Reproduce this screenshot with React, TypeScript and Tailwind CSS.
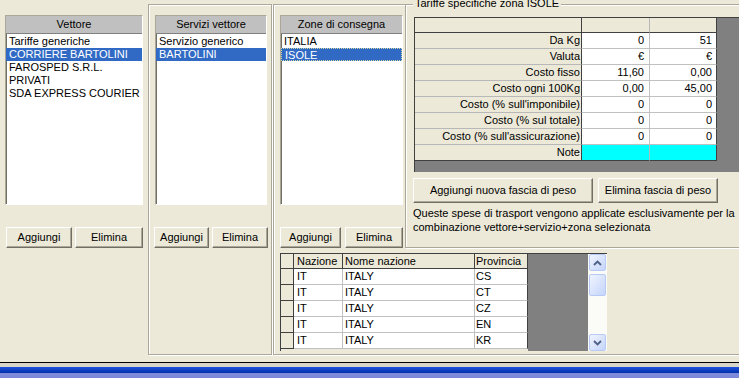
import React from "react";

const btn =
  "flex items-center justify-center bg-[#ece9d8] border border-t-white border-l-white border-r-[#716f64] border-b-[#716f64] shadow-[inset_-1px_-1px_0_#aca899] text-[11px] leading-none whitespace-nowrap";

const etched =
  "border border-[#aca899] shadow-[inset_1px_1px_0_#ffffff,1px_1px_0_#ffffff]";

function ListBox({
  w,
  title,
  items,
  sel,
  focus,
}: {
  w: string;
  title: string;
  items: string[];
  sel: number;
  focus?: boolean;
}) {
  return (
    <div
      className={`flex flex-col h-[190px] ${w} border border-t-[#aca899] border-l-[#aca899] border-r-white border-b-white`}
    >
      <div className="h-[18px] shrink-0 bg-[#c0c0c0] border-b border-[#808080] flex items-center justify-center leading-[13px]">
        {title}
      </div>
      <div className="flex-1 bg-white pt-[1px] overflow-hidden shadow-[inset_1px_0_0_#716f64]">
        {items.map((it, i) => (
          <div
            key={i}
            className={`h-[13px] leading-[13px] pl-[3px] whitespace-nowrap overflow-hidden ${
              i === sel ? "bg-[#316ac5] text-white" : ""
            } ${i === sel && focus ? "border border-dotted border-[#cfd8a0] pl-[2px] leading-[11px]" : ""}`}
          >
            {it}
          </div>
        ))}
      </div>
    </div>
  );
}

const tRows: [string, string, string][] = [
  ["Da Kg", "0", "51"],
  ["Valuta", "€", "€"],
  ["Costo fisso", "11,60", "0,00"],
  ["Costo ogni 100Kg", "0,00", "45,00"],
  ["Costo (% sull'imponibile)", "0", "0"],
  ["Costo (% sul totale)", "0", "0"],
  ["Costo (% sull'assicurazione)", "0", "0"],
];

function TariffeGrid() {
  return (
    <div className="w-[340px] h-[155px] bg-[#808080] border-l border-t border-[#404040] flex flex-col overflow-hidden">
      <div className="flex h-[15px] shrink-0">
        <div className="w-[167px] bg-[#ece9d8] border-r border-b border-[#404040]" />
        <div className="w-[68px] bg-[#ece9d8] border-r border-r-[#b8b8b8] border-b border-b-[#404040]" />
        <div className="w-[67px] bg-[#ece9d8] border-r border-b border-[#404040]" />
      </div>
      {tRows.map((r, i) => (
        <div key={i} className="flex h-[16px] shrink-0 leading-[15px]">
          <div className="w-[167px] bg-[#ece9d8] border-r border-r-[#404040] border-b border-b-[#b8b8b8] text-right pr-[1px] whitespace-nowrap">
            {r[0]}
          </div>
          <div className="w-[68px] bg-white border-r border-b border-[#c0c0c0] text-right pr-[5px]">
            {r[1]}
          </div>
          <div className="w-[67px] bg-white border-r border-r-[#404040] border-b border-b-[#c0c0c0] text-right pr-[4px]">
            {r[2]}
          </div>
        </div>
      ))}
      <div className="flex h-[16px] shrink-0 leading-[15px]">
        <div className="w-[167px] bg-[#ece9d8] border-r border-b border-[#404040] text-right pr-[1px]">
          Note
        </div>
        <div className="w-[68px] bg-[#00ffff] border-r border-r-[#b8b8b8] border-b border-b-[#404040]" />
        <div className="w-[67px] bg-[#00ffff] border-r border-b border-[#404040]" />
      </div>
    </div>
  );
}

const provs = ["CS", "CT", "CZ", "EN", "KR"];

function Chevron({ up }: { up?: boolean }) {
  return (
    <svg width="9" height="6" viewBox="0 0 9 6">
      <path
        d={up ? "M1 5 L4.5 1.5 L8 5" : "M1 1 L4.5 4.5 L8 1"}
        fill="none"
        stroke="#4d6185"
        strokeWidth="1.8"
      />
    </svg>
  );
}

const sbBtn =
  "w-[17px] h-[17px] rounded-[2px] border border-[#b7c9f5] bg-linear-to-br from-[#f0f4fe] to-[#c4d4fa] flex items-center justify-center";

function CountryGrid() {
  return (
    <div className="w-[327px] h-[98px] border-l border-t border-[#404040] flex overflow-hidden">
      <div className="flex flex-col">
        <div className="flex h-[15px] shrink-0 bg-[#ece9d8] leading-[14px]">
          <div className="w-[13px] border-r border-b border-[#404040]" />
          <div className="w-[49px] border-r border-b border-[#404040] pl-[3px]">Nazione</div>
          <div className="w-[132px] border-r border-b border-[#404040] pl-[2px]">Nome nazione</div>
          <div className="w-[53px] border-r border-b border-[#404040] pl-[1px]">Provincia</div>
        </div>
        {provs.map((p) => (
          <div key={p} className="flex h-[16px] shrink-0 leading-[15px]">
            <div className="w-[13px] bg-[#ece9d8] border-r border-b border-[#404040]" />
            <div className="w-[49px] bg-white border-r border-b border-[#c0c0c0] pl-[3px]">IT</div>
            <div className="w-[132px] bg-white border-r border-b border-[#c0c0c0] pl-[2px]">ITALY</div>
            <div className="w-[53px] bg-white border-r border-r-[#404040] border-b border-b-[#c0c0c0] pl-[1px]">
              {p}
            </div>
          </div>
        ))}
      </div>
      <div className="w-[60px] bg-[#808080]" />
      <div className="w-[19px] bg-[#fbfbf8] flex flex-col items-center pt-[0px]">
        <div className={sbBtn}>
          <Chevron up />
        </div>
        <div className="h-[3px]" />
        <div className={`${sbBtn} h-[22px]`} />
        <div className="flex-1" />
        <div className={sbBtn}>
          <Chevron />
        </div>
      </div>
    </div>
  );
}

export default function App() {
  return (
    <div className="relative w-[739px] h-[378px] overflow-hidden bg-[#ece9d8] text-[11px] leading-[13px] text-black font-['Liberation_Sans',Arial,sans-serif]">
      <div className="flex h-[356px]">
        {/* Column 1 */}
        <div className="w-[148px] shrink-0 pt-[15px] pl-[5px]">
          <ListBox
            w="w-[138px]"
            title="Vettore"
            items={[
              "Tariffe generiche",
              "CORRIERE BARTOLINI",
              "FAROSPED S.R.L.",
              "PRIVATI",
              "SDA EXPRESS COURIER SERVICE",
            ]}
            sel={1}
          />
          <div className="flex gap-[3px] mt-[22px] ml-[1px]">
            <div className={`${btn} w-[66px] h-[21px]`}>Aggiungi</div>
            <div className={`${btn} w-[68px] h-[21px]`}>Elimina</div>
          </div>
        </div>

        {/* Panel 2 */}
        <div className={`mt-[4px] w-[124px] h-[351px] shrink-0 ${etched}`}>
          <div className="ml-[6px] mt-[10px]">
            <ListBox
              w="w-[112px]"
              title="Servizi vettore"
              items={["Servizio generico", "BARTOLINI"]}
              sel={1}
            />
          </div>
          <div className="flex gap-[3px] mt-[22px] ml-[5px]">
            <div className={`${btn} w-[55px] h-[21px]`}>Aggiungi</div>
            <div className={`${btn} w-[56px] h-[21px]`}>Elimina</div>
          </div>
        </div>

        {/* Panel 3 */}
        <div className={`mt-[4px] ml-[1px] w-[480px] h-[351px] shrink-0 ${etched}`}>
          <div className="flex items-start">
            <div className="ml-[6px] w-[123px] shrink-0 pt-[10px]">
              <ListBox
                w="w-[123px]"
                title="Zone di consegna"
                items={["ITALIA", "ISOLE"]}
                sel={1}
                focus
              />
              <div className="flex gap-[4px] mt-[22px]">
                <div className={`${btn} w-[61px] h-[21px]`}>Aggiungi</div>
                <div className={`${btn} w-[58px] h-[21px]`}>Elimina</div>
              </div>
            </div>
            <div className={`relative ml-[2px] -mt-[1px] flex-1 h-[244px] ${etched}`}>
              <span className="absolute left-[7px] top-[-8px] px-[2px] bg-[#ece9d8] whitespace-nowrap leading-[13px]">
                Tariffe specifiche zona ISOLE
              </span>
              <div className="ml-[8px] mt-[12px]">
                <TariffeGrid />
              </div>
              <div className="flex gap-[5px] ml-[7px] mt-[6px]">
                <div className={`${btn} w-[180px] h-[25px]`}>Aggiungi nuova fascia di peso</div>
                <div className={`${btn} w-[120px] h-[25px]`}>Elimina fascia di peso</div>
              </div>
              <div className="ml-[7px] mt-[3px] leading-[14px] whitespace-nowrap">
                Queste spese di trasport vengono applicate esclusivamente per la
                <br />
                combinazione vettore+servizio+zona selezionata
              </div>
            </div>
          </div>
          <div className="ml-[6px] mt-[5px]">
            <CountryGrid />
          </div>
        </div>
      </div>
      <div className="h-[6px]" />
      <div className="h-[1px] bg-[#000000]" />
      <div className="h-[4px] bg-[#d8d5ca]" />
      <div className="h-[6px] bg-linear-to-b from-[#1f50e0] to-[#0030a8]" />
      <div className="h-[6px] bg-[#7d89d9]" />
    </div>
  );
}
